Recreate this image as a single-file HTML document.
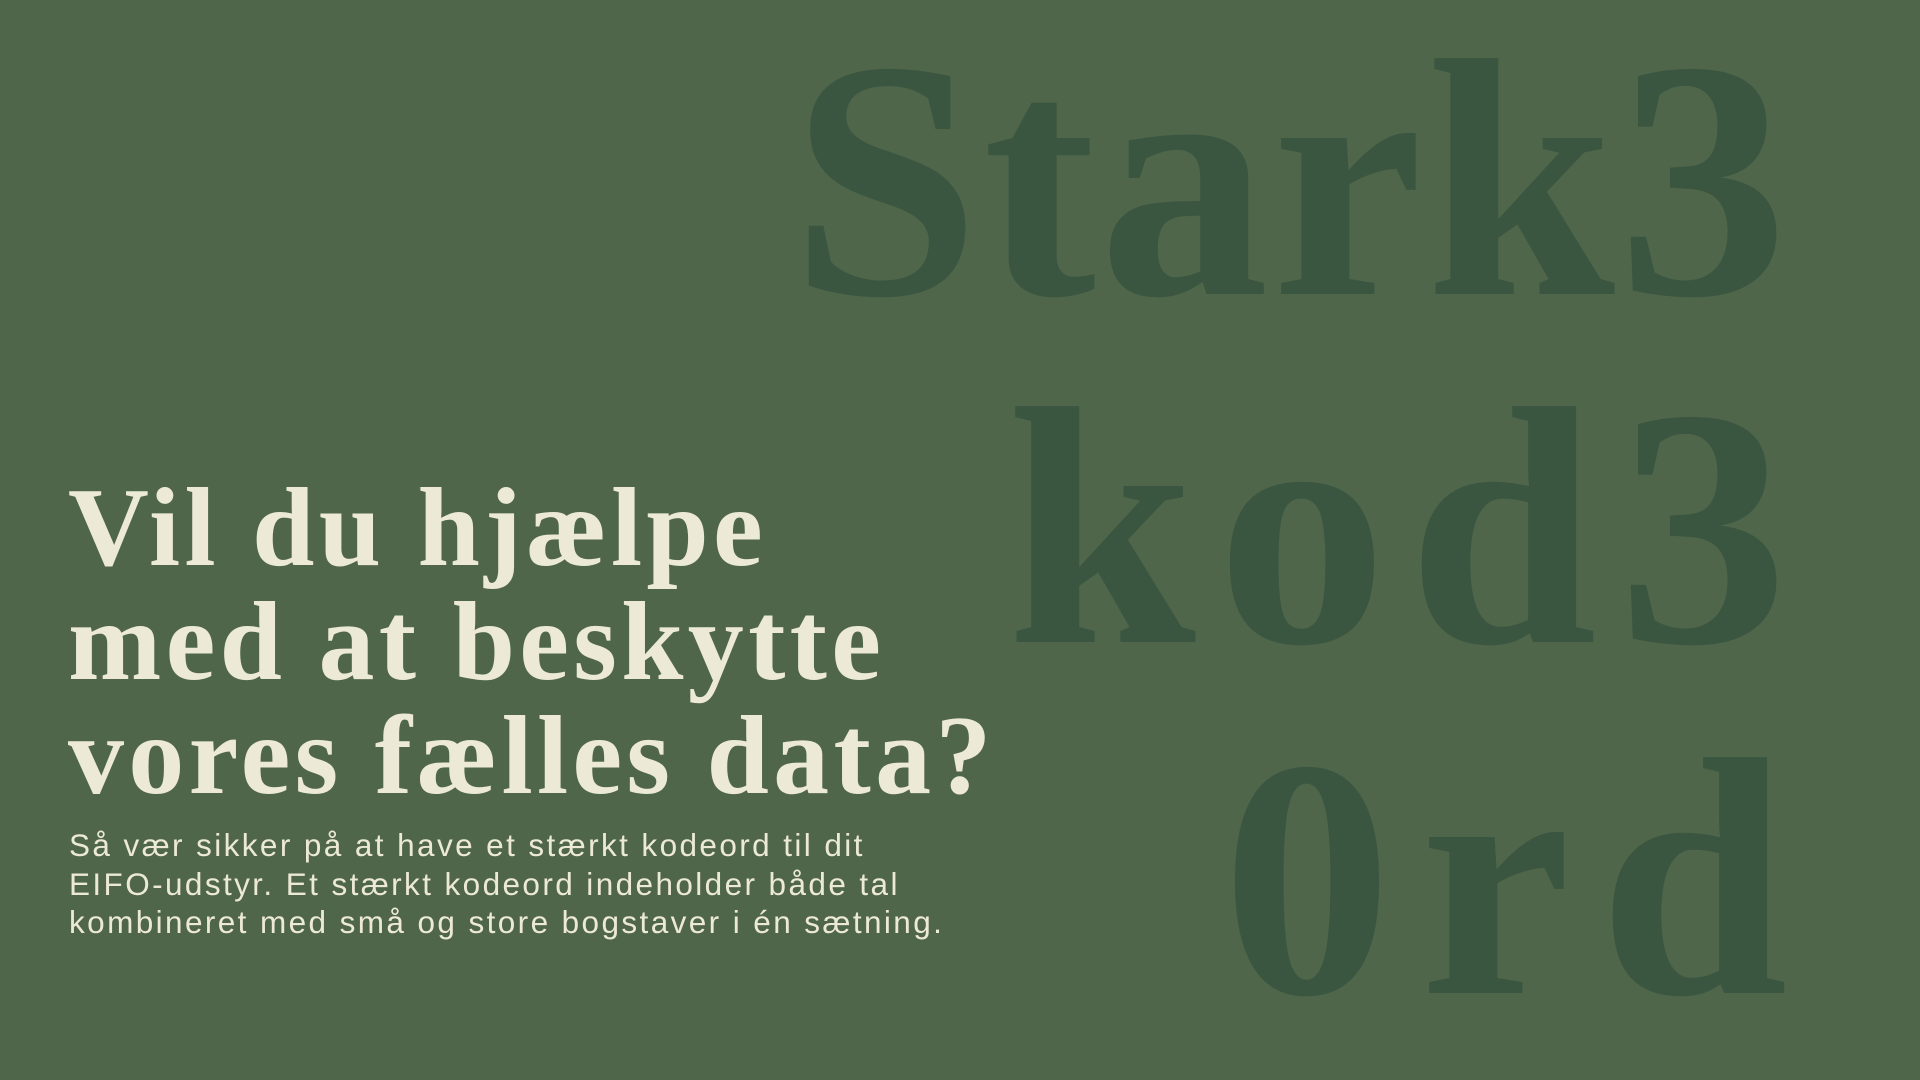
<!DOCTYPE html>
<html><head><meta charset="utf-8"><style>
html,body{margin:0;padding:0;width:1920px;height:1080px;overflow:hidden;background:#4f664b;}
.big{position:absolute;right:132px;font-family:"Liberation Serif",serif;font-weight:bold;color:#3b5640;font-size:340px;line-height:1;white-space:nowrap;text-align:right;}
.h{position:absolute;left:68px;font-family:"Liberation Serif",serif;font-weight:bold;color:#ece9d6;font-size:112px;line-height:114px;white-space:nowrap;letter-spacing:4.3px;}
.p{position:absolute;left:69px;top:826px;font-family:"Liberation Sans",sans-serif;color:#ece9d6;font-size:31.5px;line-height:38.5px;white-space:nowrap;letter-spacing:2.4px;}
</style></head><body>
<div class="big" style="top:10px;letter-spacing:3px;margin-right:-3px">Stark3</div>
<div class="big" style="top:358px;letter-spacing:21px;margin-right:-21px">kod3</div>
<div class="big" style="top:709px;letter-spacing:28px;margin-right:-28px">0rd</div>
<div class="h" style="top:471px">Vil du hjælpe<br>med at beskytte<br>vores fælles data?</div>
<div class="p">Så vær sikker på at have et stærkt kodeord til dit<br>EIFO-udstyr. Et stærkt kodeord indeholder både tal<br>kombineret med små og store bogstaver i én sætning.</div>
</body></html>
